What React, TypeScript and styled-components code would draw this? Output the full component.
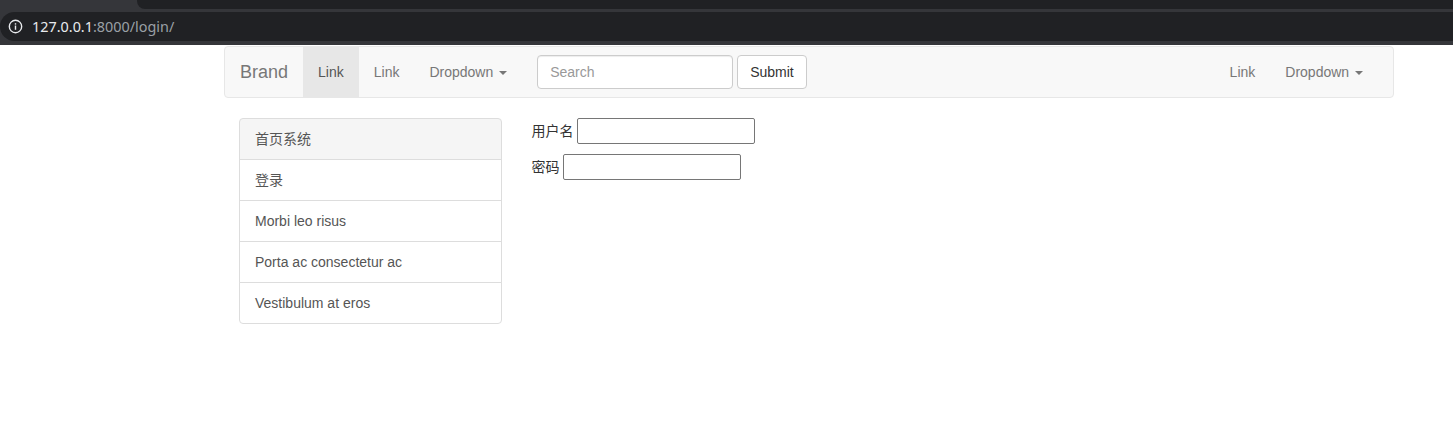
import * as React from 'react';
import styled, { createGlobalStyle } from 'styled-components';

const GlobalStyle = createGlobalStyle`
  * { box-sizing: border-box; }
  body {
    margin: 0;
    background: #fff;
    font-family: "Liberation Sans", Arial, "Noto Sans CJK SC", sans-serif;
    font-size: 14px;
    line-height: 20px;
    color: #333;
  }
`;

const Chrome = styled.div`
  display: flex;
  flex-direction: column;
  background: #35363a;
`;

const TabStrip = styled.div`
  display: flex;
  height: 9px;
`;

const TabGap = styled.div`
  width: 137px;
`;

const TabFill = styled.div`
  flex: 1;
  background: #202124;
  border-bottom-left-radius: 8px;
`;

const Toolbar = styled.div`
  display: flex;
  height: 36px;
  padding: 3px 0 4px 0;
`;

const Omnibox = styled.div`
  flex: 1;
  display: flex;
  align-items: center;
  gap: 9px;
  padding-left: 8px;
  background: #202124;
  border-radius: 15px 0 0 15px;
  font-family: "Noto Sans", "Open Sans", sans-serif;
  font-size: 14.4px;
`;

const Host = styled.span`
  color: #e8eaed;
`;

const Path = styled.span`
  color: #9aa0a6;
`;

const Url = styled.div`
  letter-spacing: 0;
`;

const Page = styled.div`
  padding-left: 224px;
  padding-top: 1px;
`;

const Container = styled.div`
  width: 1170px;
`;

const Navbar = styled.nav`
  display: flex;
  align-items: flex-start;
  height: 52px;
  padding-right: 15px;
  background: #f8f8f8;
  border: 1px solid #e7e7e7;
  border-radius: 4px;
`;

const Brand = styled.a`
  padding: 15px;
  font-size: 18px;
  line-height: 20px;
  color: #777;
`;

const NavList = styled.ul<{ $right?: boolean }>`
  display: flex;
  margin: 0;
  padding: 0;
  list-style: none;
  margin-left: ${p => (p.$right ? 'auto' : '0')};
`;

const NavItem = styled.li<{ $active?: boolean }>`
  padding: 15px;
  line-height: 20px;
  color: ${p => (p.$active ? '#555' : '#777')};
  background: ${p => (p.$active ? '#e7e7e7' : 'transparent')};
`;

const Caret = styled.span`
  display: inline-block;
  width: 0;
  height: 0;
  margin-left: 2px;
  vertical-align: middle;
  border-top: 4px solid;
  border-right: 4px solid transparent;
  border-left: 4px solid transparent;
`;

const NavForm = styled.form`
  display: flex;
  gap: 4px;
  margin-top: 8px;
  padding: 0 15px;
`;

const SearchInput = styled.input`
  width: 196px;
  height: 34px;
  padding: 6px 12px;
  font: inherit;
  font-size: 14px;
  color: #555;
  background: #fff;
  border: 1px solid #ccc;
  border-radius: 4px;
  box-shadow: inset 0 1px 1px rgba(0, 0, 0, 0.075);
  &::placeholder { color: #999; }
`;

const Button = styled.button`
  height: 34px;
  padding: 6px 12px;
  font: inherit;
  font-size: 14px;
  color: #333;
  background: #fff;
  border: 1px solid #ccc;
  border-radius: 4px;
`;

const Row = styled.div`
  display: grid;
  grid-template-columns: 292.5px 1fr;
  margin-top: 20px;
`;

const Col = styled.div`
  padding: 0 15px;
`;

const ListGroup = styled.div`
  display: flex;
  flex-direction: column;
`;

const ListItem = styled.a<{ $hover?: boolean }>`
  display: block;
  padding: 10px 15px;
  margin-bottom: -1px;
  color: #555;
  background: ${p => (p.$hover ? '#f5f5f5' : '#fff')};
  border: 1px solid #ddd;
  &:first-child { border-radius: 4px 4px 0 0; }
  &:last-child { border-radius: 0 0 4px 4px; margin-bottom: 0; }
`;

const Field = styled.p`
  display: flex;
  align-items: center;
  gap: 3px;
  margin: 0 0 10px;
`;

const Label = styled.label`
  color: #333;
`;

const TextInput = styled.input`
  width: 178px;
  height: 26px;
  padding: 1px 2px;
  font: inherit;
  border: 1px solid #767676;
  border-radius: 2px;
  background: #fff;
`;

const InfoIcon = () => (
  <svg width="15" height="15" viewBox="0 0 16 16" fill="none">
    <circle cx="8" cy="8" r="6.6" stroke="#e8eaed" strokeWidth="1.5" />
    <rect x="7.25" y="7" width="1.5" height="4.5" fill="#e8eaed" />
    <rect x="7.25" y="4.5" width="1.5" height="1.5" fill="#e8eaed" />
  </svg>
);

const sideLinks = ['首页系统', '登录', 'Morbi leo risus', 'Porta ac consectetur ac', 'Vestibulum at eros'];

const App = () => {
  return (
    <>
      <GlobalStyle />
      <Chrome>
        <TabStrip>
          <TabGap />
          <TabFill />
        </TabStrip>
        <Toolbar>
          <Omnibox>
            <InfoIcon />
            <Url>
              <Host>127.0.0.1</Host>
              <Path>:8000/login/</Path>
            </Url>
          </Omnibox>
        </Toolbar>
      </Chrome>
      <Page>
        <Container>
          <Navbar>
            <Brand>Brand</Brand>
            <NavList>
              <NavItem $active>Link</NavItem>
              <NavItem>Link</NavItem>
              <NavItem>Dropdown <Caret /></NavItem>
            </NavList>
            <NavForm onSubmit={e => e.preventDefault()}>
              <SearchInput placeholder="Search" />
              <Button type="submit">Submit</Button>
            </NavForm>
            <NavList $right>
              <NavItem>Link</NavItem>
              <NavItem>Dropdown <Caret /></NavItem>
            </NavList>
          </Navbar>
          <Row>
            <Col>
              <ListGroup>
                {sideLinks.map((text, i) => (
                  <ListItem key={text} $hover={i === 0}>{text}</ListItem>
                ))}
              </ListGroup>
            </Col>
            <Col>
              <form>
                <Field>
                  <Label>用户名</Label>
                  <TextInput type="text" />
                </Field>
                <Field>
                  <Label>密码</Label>
                  <TextInput type="password" />
                </Field>
              </form>
            </Col>
          </Row>
        </Container>
      </Page>
    </>
  );
};

export default App;
